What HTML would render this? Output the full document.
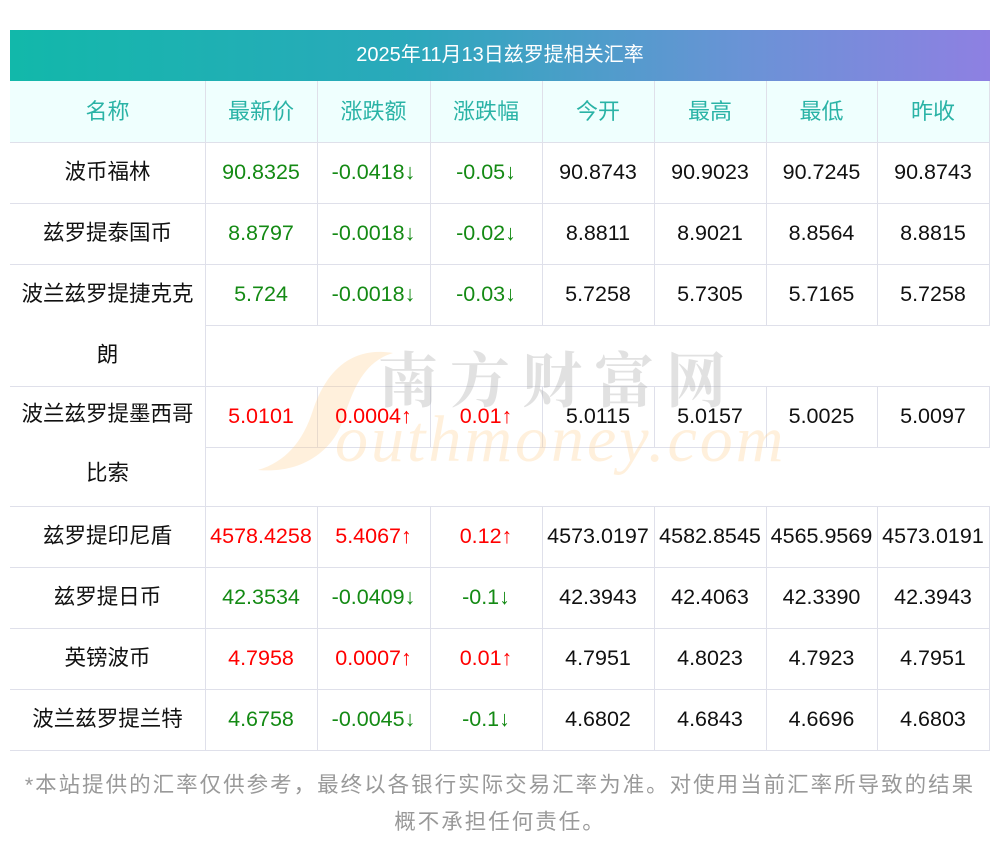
<!DOCTYPE html>
<html><head><meta charset="utf-8"><style>
body{margin:0;background:#fff;width:1000px;height:853px;position:relative;overflow:hidden;font-family:"Liberation Sans","Noto Sans CJK SC",sans-serif;}
.t{position:absolute;left:10px;top:30px;width:980px;height:51px;background:linear-gradient(90deg,#12b8aa,#2aa9bb 40%,#6a93d6 75%,#8e80e2);color:#fff;font-size:20px;line-height:51px;text-align:center}
.hd{position:absolute;left:10px;top:81px;width:980px;height:61px;background:#effffe}
.c{position:absolute;height:61px;line-height:61px;text-align:center;font-size:21.5px;color:#111;white-space:nowrap}
.h{color:#2ab3a6;font-size:22px}
.g{color:#148a14}.r{color:#f00}
.hl{position:absolute;height:1px;background:#dfe0ea}
.vl{position:absolute;width:1px;background:#dfe0ea}
.ft{position:absolute;left:0;width:1000px;text-align:center;color:#999;font-size:21.5px;line-height:37px;top:767px;letter-spacing:2px}
.wm1{position:absolute;left:378px;top:342px;font-size:60px;line-height:70px;color:rgba(170,170,170,.35);letter-spacing:12px;font-weight:bold;font-family:"Noto Serif CJK SC",serif}
.wm2{position:absolute;left:335px;top:400px;font-size:66px;line-height:80px;color:rgba(255,205,140,.3);font-style:italic;font-family:"Liberation Serif",serif;letter-spacing:3px}
.wmS{position:absolute;left:255px;top:350px;width:140px;height:125px;}
</style></head><body>
<div class="t">2025年11月13日兹罗提相关汇率</div>
<div class="hd"></div>
<div class="hl" style="left:10px;top:142px;width:980px"></div>
<div class="hl" style="left:10px;top:203px;width:980px"></div>
<div class="hl" style="left:10px;top:264px;width:980px"></div>
<div class="hl" style="left:205px;top:325px;width:785px"></div>
<div class="hl" style="left:10px;top:386px;width:980px"></div>
<div class="hl" style="left:205px;top:447px;width:785px"></div>
<div class="hl" style="left:10px;top:506px;width:980px"></div>
<div class="hl" style="left:10px;top:567px;width:980px"></div>
<div class="hl" style="left:10px;top:628px;width:980px"></div>
<div class="hl" style="left:10px;top:689px;width:980px"></div>
<div class="hl" style="left:10px;top:750px;width:980px"></div>
<div class="vl" style="left:205px;top:81px;height:669px"></div>
<div class="vl" style="left:317px;top:81px;height:244px"></div><div class="vl" style="left:317px;top:386px;height:61px"></div><div class="vl" style="left:317px;top:506px;height:244px"></div>
<div class="vl" style="left:430px;top:81px;height:244px"></div><div class="vl" style="left:430px;top:386px;height:61px"></div><div class="vl" style="left:430px;top:506px;height:244px"></div>
<div class="vl" style="left:542px;top:81px;height:244px"></div><div class="vl" style="left:542px;top:386px;height:61px"></div><div class="vl" style="left:542px;top:506px;height:244px"></div>
<div class="vl" style="left:654px;top:81px;height:244px"></div><div class="vl" style="left:654px;top:386px;height:61px"></div><div class="vl" style="left:654px;top:506px;height:244px"></div>
<div class="vl" style="left:766px;top:81px;height:244px"></div><div class="vl" style="left:766px;top:386px;height:61px"></div><div class="vl" style="left:766px;top:506px;height:244px"></div>
<div class="vl" style="left:877px;top:81px;height:244px"></div><div class="vl" style="left:877px;top:386px;height:61px"></div><div class="vl" style="left:877px;top:506px;height:244px"></div>
<div class="vl" style="left:989px;top:81px;height:244px"></div><div class="vl" style="left:989px;top:386px;height:61px"></div><div class="vl" style="left:989px;top:506px;height:244px"></div>

<svg class="wmS" viewBox="0 0 140 125"><path d="M138 3 C90 -5 68 30 58 60 C48 92 30 112 3 120 C48 124 78 100 88 70 C98 40 108 12 138 3Z" fill="rgba(255,205,140,.3)"/></svg>
<div class="wm1">南方财富网</div>
<div class="wm2">outhmoney.com</div>

<div class="c h" style="left:10px;top:81px;width:195px">名称</div>
<div class="c h" style="left:205px;top:81px;width:112px">最新价</div>
<div class="c h" style="left:317px;top:81px;width:113px">涨跌额</div>
<div class="c h" style="left:430px;top:81px;width:112px">涨跌幅</div>
<div class="c h" style="left:542px;top:81px;width:112px">今开</div>
<div class="c h" style="left:654px;top:81px;width:112px">最高</div>
<div class="c h" style="left:766px;top:81px;width:111px">最低</div>
<div class="c h" style="left:877px;top:81px;width:112px">昨收</div>

<div style="position:absolute;left:0;top:142px">
<div class="c" style="left:10px;width:195px">波币福林</div><div class="c g" style="left:205px;width:112px">90.8325</div><div class="c g" style="left:317px;width:113px">-0.0418↓</div><div class="c g" style="left:430px;width:112px">-0.05↓</div><div class="c" style="left:542px;width:112px">90.8743</div><div class="c" style="left:654px;width:112px">90.9023</div><div class="c" style="left:766px;width:111px">90.7245</div><div class="c" style="left:877px;width:112px">90.8743</div></div>
<div style="position:absolute;left:0;top:203px">
<div class="c" style="left:10px;width:195px">兹罗提泰国币</div><div class="c g" style="left:205px;width:112px">8.8797</div><div class="c g" style="left:317px;width:113px">-0.0018↓</div><div class="c g" style="left:430px;width:112px">-0.02↓</div><div class="c" style="left:542px;width:112px">8.8811</div><div class="c" style="left:654px;width:112px">8.9021</div><div class="c" style="left:766px;width:111px">8.8564</div><div class="c" style="left:877px;width:112px">8.8815</div></div>
<div style="position:absolute;left:0;top:264px">
<div class="c" style="left:10px;width:195px">波兰兹罗提捷克克</div><div class="c" style="left:10px;top:61px;width:195px">朗</div><div class="c g" style="left:205px;width:112px">5.724</div><div class="c g" style="left:317px;width:113px">-0.0018↓</div><div class="c g" style="left:430px;width:112px">-0.03↓</div><div class="c" style="left:542px;width:112px">5.7258</div><div class="c" style="left:654px;width:112px">5.7305</div><div class="c" style="left:766px;width:111px">5.7165</div><div class="c" style="left:877px;width:112px">5.7258</div></div>
<div style="position:absolute;left:0;top:386px">
<div class="c" style="left:10px;top:-2px;width:195px">波兰兹罗提墨西哥</div><div class="c" style="left:10px;top:57px;width:195px">比索</div><div class="c r" style="left:205px;width:112px">5.0101</div><div class="c r" style="left:317px;width:113px">0.0004↑</div><div class="c r" style="left:430px;width:112px">0.01↑</div><div class="c" style="left:542px;width:112px">5.0115</div><div class="c" style="left:654px;width:112px">5.0157</div><div class="c" style="left:766px;width:111px">5.0025</div><div class="c" style="left:877px;width:112px">5.0097</div></div>
<div style="position:absolute;left:0;top:506px">
<div class="c" style="left:10px;width:195px">兹罗提印尼盾</div><div class="c r" style="left:205px;width:112px">4578.4258</div><div class="c r" style="left:317px;width:113px">5.4067↑</div><div class="c r" style="left:430px;width:112px">0.12↑</div><div class="c" style="left:542px;width:112px">4573.0197</div><div class="c" style="left:654px;width:112px">4582.8545</div><div class="c" style="left:766px;width:111px">4565.9569</div><div class="c" style="left:877px;width:112px">4573.0191</div></div>
<div style="position:absolute;left:0;top:567px">
<div class="c" style="left:10px;width:195px">兹罗提日币</div><div class="c g" style="left:205px;width:112px">42.3534</div><div class="c g" style="left:317px;width:113px">-0.0409↓</div><div class="c g" style="left:430px;width:112px">-0.1↓</div><div class="c" style="left:542px;width:112px">42.3943</div><div class="c" style="left:654px;width:112px">42.4063</div><div class="c" style="left:766px;width:111px">42.3390</div><div class="c" style="left:877px;width:112px">42.3943</div></div>
<div style="position:absolute;left:0;top:628px">
<div class="c" style="left:10px;width:195px">英镑波币</div><div class="c r" style="left:205px;width:112px">4.7958</div><div class="c r" style="left:317px;width:113px">0.0007↑</div><div class="c r" style="left:430px;width:112px">0.01↑</div><div class="c" style="left:542px;width:112px">4.7951</div><div class="c" style="left:654px;width:112px">4.8023</div><div class="c" style="left:766px;width:111px">4.7923</div><div class="c" style="left:877px;width:112px">4.7951</div></div>
<div style="position:absolute;left:0;top:689px">
<div class="c" style="left:10px;width:195px">波兰兹罗提兰特</div><div class="c g" style="left:205px;width:112px">4.6758</div><div class="c g" style="left:317px;width:113px">-0.0045↓</div><div class="c g" style="left:430px;width:112px">-0.1↓</div><div class="c" style="left:542px;width:112px">4.6802</div><div class="c" style="left:654px;width:112px">4.6843</div><div class="c" style="left:766px;width:111px">4.6696</div><div class="c" style="left:877px;width:112px">4.6803</div></div>

<div class="ft">*本站提供的汇率仅供参考，最终以各银行实际交易汇率为准。对使用当前汇率所导致的结果<br>概不承担任何责任。</div>
</body></html>
